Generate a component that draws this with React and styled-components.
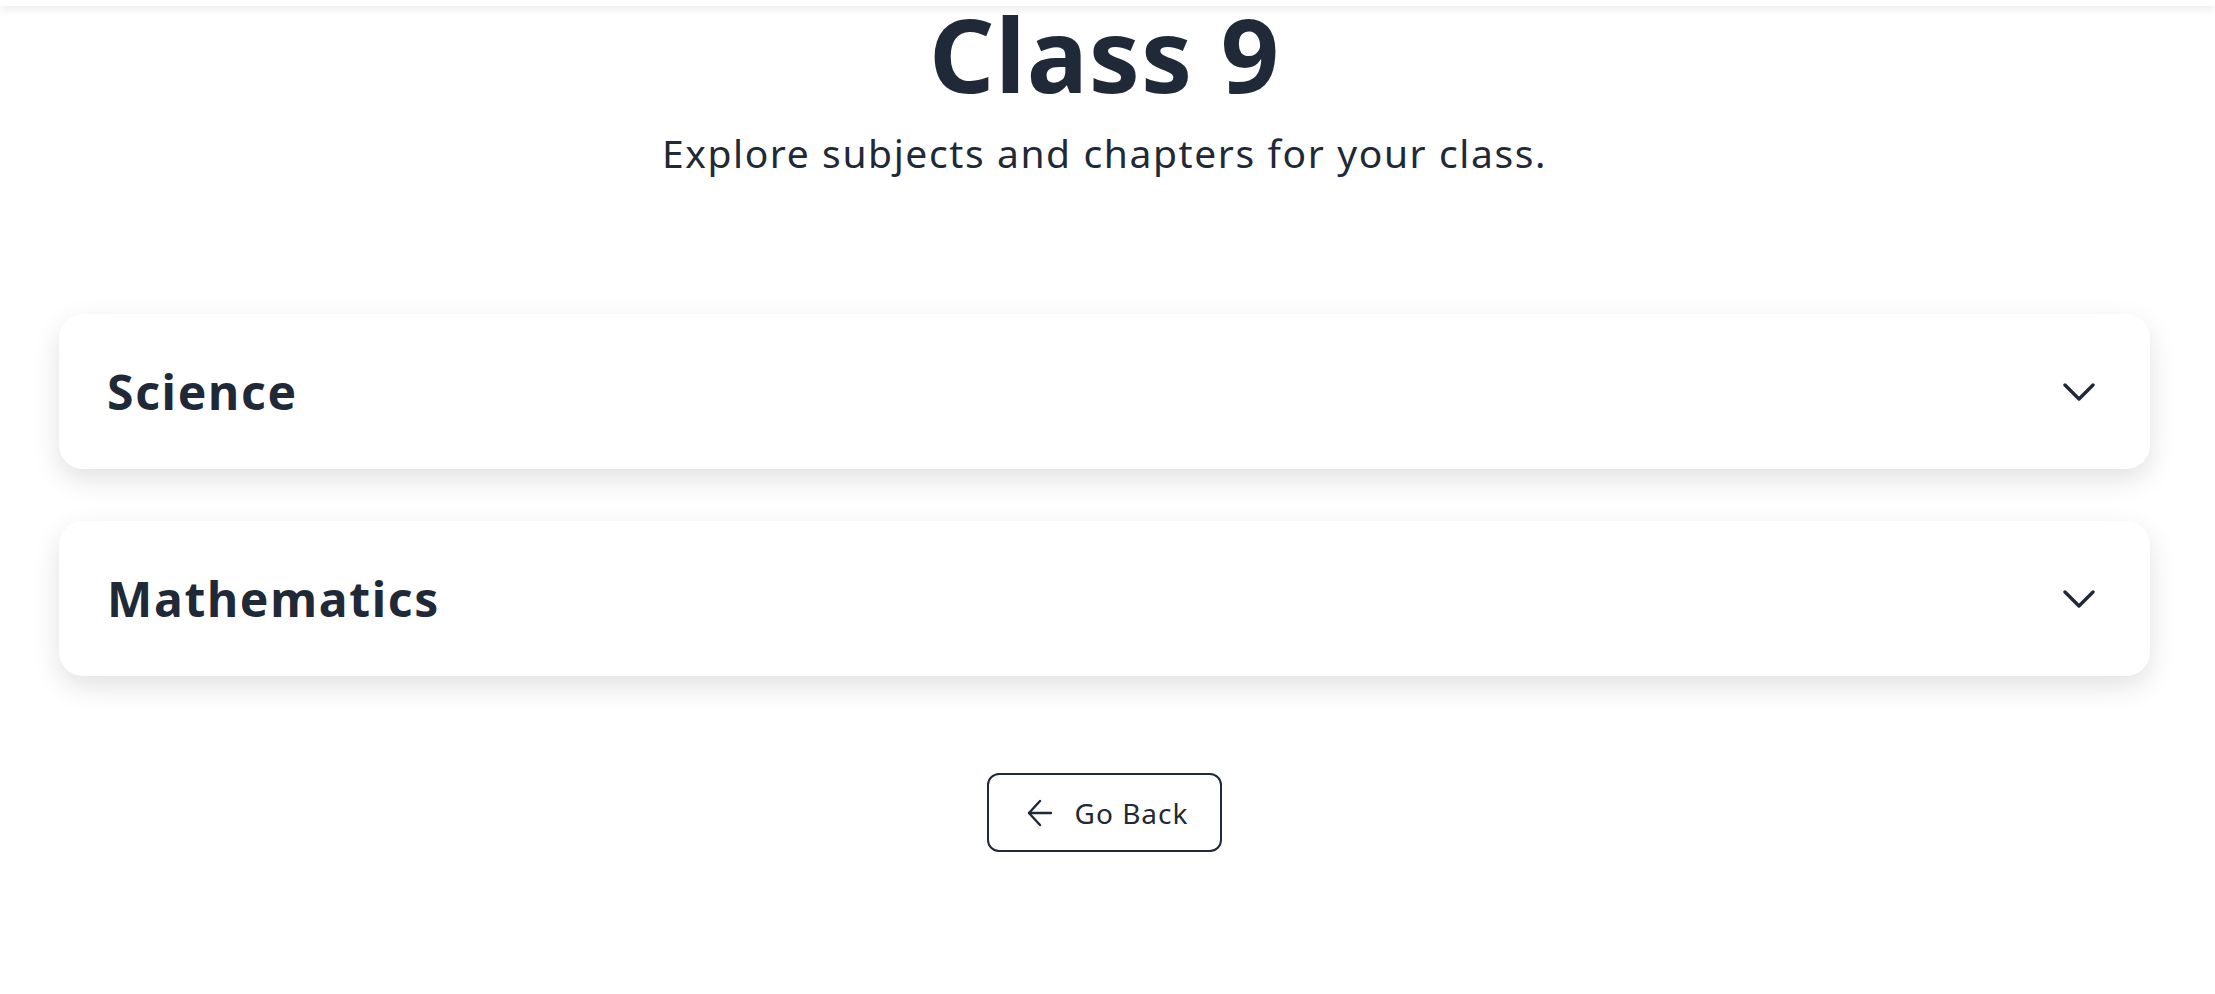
import React from 'react';
import styled, { createGlobalStyle } from 'styled-components';

const GlobalStyle = createGlobalStyle`
    body {
        margin: 0;
        background: #ffffff;
        font-family: "Noto Sans", "Open Sans", sans-serif;
        color: #1f2937;
    }
`;

const subjects = ['Science', 'Mathematics'];

function ChevronDown() {
    return (
        <svg width="32" height="18" viewBox="0 0 32 18" fill="none" stroke="currentColor" strokeWidth="3.4" strokeLinecap="round" strokeLinejoin="round">
            <path d="M2 2L16 16L30 2" />
        </svg>
    );
}

function ArrowLeft() {
    return (
        <svg width="26" height="28" viewBox="0 0 26 28" fill="none" stroke="currentColor" strokeWidth="2.4" strokeLinecap="round" strokeLinejoin="round">
            <path d="M24 14H2" />
            <path d="M13 2L2 14L13 26" />
        </svg>
    );
}

function App() {
    return (
        <PageStyled>
            <GlobalStyle />
            <Header />
            <main className="content">
                <Title>Class 9</Title>
                <Subtitle>Explore subjects and chapters for your class.</Subtitle>
                <SubjectList>
                    {subjects.map((name) => (
                        <SubjectCard key={name}>
                            <h2>{name}</h2>
                            <span className="chevron"><ChevronDown /></span>
                        </SubjectCard>
                    ))}
                </SubjectList>
                <BackButton type="button">
                    <ArrowLeft />
                    <span>Go Back</span>
                </BackButton>
            </main>
        </PageStyled>
    );
}

const PageStyled = styled.div`
    min-height: 994px;
    display: flex;
    flex-direction: column;

    .content {
        display: flex;
        flex-direction: column;
        align-items: center;
        padding: 0 65px 0 59px;
    }
`;

const Header = styled.header`
    height: 6px;
    background: #ffffff;
    box-shadow: 0 2px 10px rgba(0, 0, 0, 0.12);
    position: relative;
    z-index: 2;
`;

const Title = styled.h1`
    margin: 0;
    font-family: "Noto Sans", sans-serif;
    font-weight: 700;
    font-size: 102px;
    line-height: 95px;
    letter-spacing: 1px;
    color: #1f2937;
`;

const Subtitle = styled.p`
    margin: 25px 0 0;
    font-family: "Noto Sans", sans-serif;
    font-size: 39px;
    line-height: 53px;
    letter-spacing: 1.6px;
    font-weight: 400;
    color: #1f2937;
`;

const SubjectList = styled.div`
    width: 100%;
    display: flex;
    flex-direction: column;
    gap: 52px;
    margin-top: 135px;
`;

const SubjectCard = styled.div`
    height: 155px;
    box-sizing: border-box;
    display: flex;
    align-items: center;
    justify-content: space-between;
    padding: 0 55px 0 48px;
    background: #ffffff;
    border-radius: 24px;
    box-shadow: 0 10px 28px rgba(0, 0, 0, 0.12);

    h2 {
        margin: 0;
        font-family: "Noto Sans", sans-serif;
        font-weight: 700;
        font-size: 48px;
        letter-spacing: 1.7px;
        color: #1f2937;
    }

    .chevron {
        display: flex;
        color: #1f2937;
    }
`;

const BackButton = styled.button`
    margin-top: 97px;
    width: 235px;
    height: 79px;
    display: flex;
    align-items: center;
    justify-content: center;
    gap: 22px;
    padding: 0 0 0 6px;
    background: #ffffff;
    border: 2px solid #1f2937;
    border-radius: 12px;
    color: #1f2937;
    font-family: "Noto Sans", sans-serif;
    font-size: 28px;
    letter-spacing: 1px;
    cursor: pointer;
`;

export default App;
